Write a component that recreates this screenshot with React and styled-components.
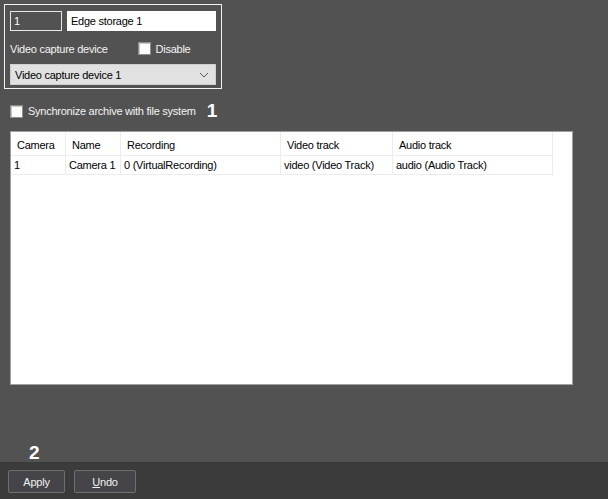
import React from 'react'
import styled, { createGlobalStyle } from 'styled-components'

const GlobalStyle = createGlobalStyle`
  html, body {
    margin: 0;
    padding: 0;
    background: #525252;
  }
  body {
    font-family: "Liberation Sans", Arial, sans-serif;
    font-size: 11px;
    letter-spacing: -0.25px;
  }
`

const Page = styled.div`
  width: 608px;
  height: 499px;
  display: flex;
  flex-direction: column;
  background: #525252;
  color: #fff;
  overflow: hidden;
`

const Content = styled.div`
  flex: 1;
  padding: 4px 0 0 4px;
  position: relative;
`

const GroupBox = styled.div`
  width: 218px;
  height: 85px;
  border: 1px solid #f2f2f2;
  box-sizing: border-box;
  padding: 6px 5px 0 5px;
  display: flex;
  flex-direction: column;
`

const Row = styled.div`
  display: flex;
  align-items: center;
  gap: ${props => props.gap || 0}px;
  height: ${props => props.height || 'auto'};
  margin-top: ${props => props.top || 0}px;
`

const TextInput = styled.div`
  box-sizing: border-box;
  height: 20px;
  width: ${props => props.width}px;
  border: 1px solid ${props => (props.light ? '#fff' : '#e8e8e8')};
  background: ${props => (props.light ? '#fff' : '#525252')};
  color: ${props => (props.light ? '#000' : '#fff')};
  padding: 2px 3px;
  line-height: 14px;
`

const Label = styled.span`
  color: #f4f4f4;
  white-space: nowrap;
`

const Check = styled.span`
  display: inline-block;
  box-sizing: border-box;
  width: 13px;
  height: 13px;
  background: #fff;
  border: 1px solid #8e8e8e;
  box-shadow: inset 1px 1px 0 #c8c8c8;
  margin-right: 5px;
`

const CheckLabel = styled.label`
  display: flex;
  align-items: center;
  margin-left: ${props => props.offset || 0}px;
`

const Select = styled.div`
  box-sizing: border-box;
  width: 207px;
  height: 21px;
  background: #e1e1e1;
  border: 1px solid #cfcfcf;
  color: #000;
  display: flex;
  align-items: center;
  justify-content: space-between;
  padding: 0 6px 0 4px;
`

const SyncRow = styled.div`
  display: flex;
  align-items: center;
  margin: 15px 0 0 6px;
  height: 14px;
`

const Marker = styled.span`
  font-weight: bold;
  font-size: 19px;
  letter-spacing: 0;
  color: #fff;
  margin-left: ${props => props.offset || 0}px;
`

const TableBox = styled.div`
  margin: 13px 0 0 6px;
  width: 563px;
  height: 254px;
  background: #fff;
  border: 1px solid #a0a0a0;
  box-sizing: border-box;
  color: #000;
`

const Grid = styled.div`
  display: grid;
  grid-template-columns: 55px 55px 160px 112px 160px;
  width: 542px;
`

const Cell = styled.div`
  box-sizing: border-box;
  height: ${props => (props.head ? 24 : 19)}px;
  padding-left: ${props => (props.head ? 6 : 3)}px;
  padding-top: ${props => (props.head ? 2 : 0)}px;
  display: flex;
  align-items: center;
  border-right: 1px solid #ececec;
  border-bottom: 1px solid #ececec;
  white-space: nowrap;
`

const MarkerTwo = styled.div`
  position: absolute;
  left: 29px;
  bottom: 0px;
  font-weight: bold;
  font-size: 19px;
  line-height: 19px;
  letter-spacing: 0;
`

const Footer = styled.div`
  height: 37px;
  background: #3c3b3c;
  display: flex;
  align-items: center;
  gap: 9px;
  padding-left: 8px;
`

const Button = styled.button`
  box-sizing: border-box;
  width: ${props => props.width}px;
  height: 23px;
  background: #454448;
  border: 1px solid #6f6f73;
  border-radius: 2px;
  color: #f2f2f2;
  font-family: "Liberation Sans", Arial, sans-serif;
  font-size: 11px;
  letter-spacing: -0.25px;
  padding: 0;
  margin-top: 2px;

  u {
    text-decoration: underline;
  }
`

const Chevron = () => (
  <svg width="10" height="6" viewBox="0 0 10 6">
    <path d="M1 1 L5 5 L9 1" fill="none" stroke="#555" strokeWidth="1" />
  </svg>
)

const columns = ['Camera', 'Name', 'Recording', 'Video track', 'Audio track']
const rows = [['1', 'Camera 1', '0 (VirtualRecording)', 'video (Video Track)', 'audio (Audio Track)']]

export default function App() {
  return (
    <Page>
      <GlobalStyle />
      <Content>
        <GroupBox>
          <Row gap={5}>
            <TextInput width={52}>1</TextInput>
            <TextInput width={149} light>Edge storage 1</TextInput>
          </Row>
          <Row height="25px" top={5}>
            <Label>Video capture device</Label>
            <CheckLabel offset={30}>
              <Check />
              <Label>Disable</Label>
            </CheckLabel>
          </Row>
          <Row top={3}>
            <Select>
              <span>Video capture device 1</span>
              <Chevron />
            </Select>
          </Row>
        </GroupBox>
        <SyncRow>
          <Check />
          <Label>Synchronize archive with file system</Label>
          <Marker offset={11}>1</Marker>
        </SyncRow>
        <TableBox>
          <Grid>
            {columns.map(c => (
              <Cell head key={c}>{c}</Cell>
            ))}
            {rows.map(r =>
              r.map((v, i) => <Cell key={i}>{v}</Cell>)
            )}
          </Grid>
        </TableBox>
        <MarkerTwo>2</MarkerTwo>
      </Content>
      <Footer>
        <Button width={57}>Apply</Button>
        <Button width={62}><u>U</u>ndo</Button>
      </Footer>
    </Page>
  )
}
